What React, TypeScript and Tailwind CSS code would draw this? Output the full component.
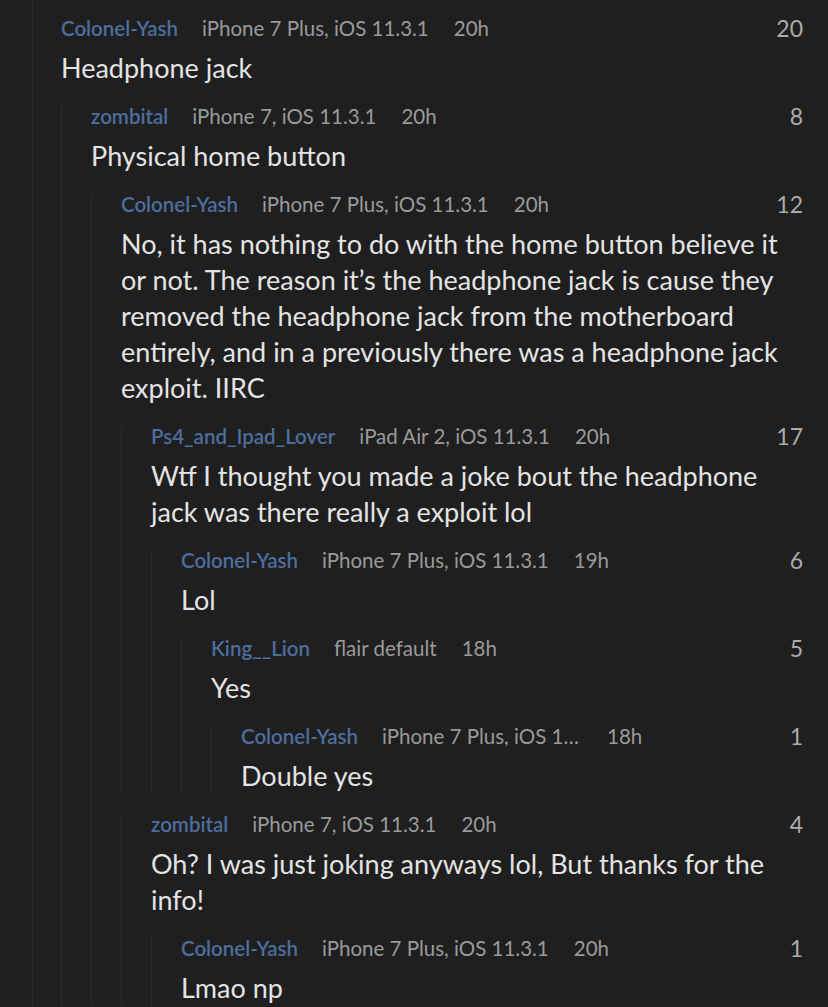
type Comment = {
  user: string
  meta: string
  time: string
  score: number
  body: string[]
  metaMax?: string
  replies?: Comment[]
}

const thread: Comment = {
  user: 'Colonel-Yash',
  meta: 'iPhone 7 Plus, iOS 11.3.1',
  time: '20h',
  score: 20,
  body: ['Headphone jack'],
  replies: [
    {
      user: 'zombital',
      meta: 'iPhone 7, iOS 11.3.1',
      time: '20h',
      score: 8,
      body: ['Physical home button'],
      replies: [
        {
          user: 'Colonel-Yash',
          meta: 'iPhone 7 Plus, iOS 11.3.1',
          time: '20h',
          score: 12,
          body: [
            'No, it has nothing to do with the home button believe it',
            'or not. The reason it\u2019s the headphone jack is cause they',
            'removed the headphone jack from the motherboard',
            'entirely, and in a previously there was a headphone jack',
            'exploit. IIRC',
          ],
          replies: [
            {
              user: 'Ps4_and_Ipad_Lover',
              meta: 'iPad Air 2, iOS 11.3.1',
              time: '20h',
              score: 17,
              body: ['Wtf I thought you made a joke bout the headphone', 'jack was there really a exploit lol'],
              replies: [
                {
                  user: 'Colonel-Yash',
                  meta: 'iPhone 7 Plus, iOS 11.3.1',
                  time: '19h',
                  score: 6,
                  body: ['Lol'],
                  replies: [
                    {
                      user: 'King__Lion',
                      meta: 'flair default',
                      time: '18h',
                      score: 5,
                      body: ['Yes'],
                      replies: [
                        {
                          user: 'Colonel-Yash',
                          meta: 'iPhone 7 Plus, iOS 11.3.1',
                          metaMax: 'max-w-[200px] truncate',
                          time: '18h',
                          score: 1,
                          body: ['Double yes'],
                        },
                      ],
                    },
                  ],
                },
              ],
            },
            {
              user: 'zombital',
              meta: 'iPhone 7, iOS 11.3.1',
              time: '20h',
              score: 4,
              body: ['Oh? I was just joking anyways lol, But thanks for the', 'info!'],
              replies: [
                {
                  user: 'Colonel-Yash',
                  meta: 'iPhone 7 Plus, iOS 11.3.1',
                  time: '20h',
                  score: 1,
                  body: ['Lmao np'],
                },
              ],
            },
          ],
        },
      ],
    },
  ],
}

function CommentBlock({ c, root }: { c: Comment; root?: boolean }) {
  return (
    <div className={root ? 'border-l border-[#2c2c2c] pl-[28px] pt-[18px]' : 'border-l border-[#2c2c2c] pl-[29px] mt-[20px]'}>
      {/* header */}
      <div className="flex items-center h-[20px] text-[20.5px] leading-[20px]">
        <span className="font-semibold text-[#4d6e9e] shrink-0">{c.user}</span>
        <span className={`ml-[24px] text-[#9a9a9a] whitespace-nowrap ${c.metaMax ?? 'shrink-0'}`}>{c.meta}</span>
        <span className="ml-[25px] text-[#9a9a9a] shrink-0">{c.time}</span>
        <span className="ml-auto text-[23px] text-[#ababab] shrink-0">{c.score}</span>
      </div>
      <div className="mt-[12px] text-[27px] leading-[36px] text-[#e4e4e4] whitespace-nowrap">
        {c.body.map((line, i) => (
          <div key={i}>{line}</div>
        ))}
      </div>
      {c.replies?.map((r, i) => (
        <CommentBlock key={i} c={r} />
      ))}
    </div>
  )
}

export default function App() {
  return (
    <div
      className="w-[828px] h-[1007px] overflow-hidden bg-[#1f1f1f] pl-[32px] pr-[25px]"
      style={{ fontFamily: 'Lato, "Noto Sans", sans-serif' }}
    >
      <CommentBlock c={thread} root />
    </div>
  )
}
